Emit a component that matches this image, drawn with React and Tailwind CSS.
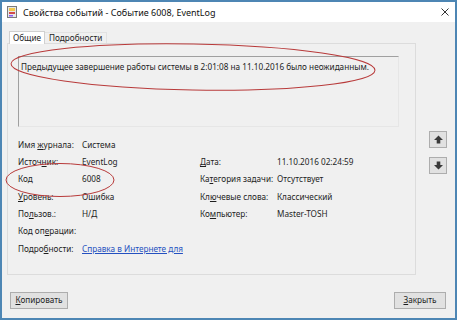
import React from "react";

const U = ({ children }) => <span className="underline underline-offset-1">{children}</span>;

function Row({ l, v, l2, v2, link }) {
  return (
    <div className="grid grid-cols-[64px_118px_77px_1fr] h-[17.33px] items-center whitespace-nowrap">
      <div>{l}</div>
      <div>{link ? <span className="text-[#2450c0] underline underline-offset-1">{v}</span> : v}</div>
      <div>{l2}</div>
      <div>{v2}</div>
    </div>
  );
}

function Arrow({ up }) {
  return (
    <div className="w-[18px] h-[17px] bg-[#e1e1e1] border border-[#adadad] flex items-center justify-center">
      <svg width="9" height="9" viewBox="0 0 10 10">
        <polygon
          points={up ? "5,0.5 10,5.5 7,5.5 7,9.5 3,9.5 3,5.5 0,5.5" : "5,9.5 10,4.5 7,4.5 7,0.5 3,0.5 3,4.5 0,4.5"}
          fill="#3a3a3a"
        />
      </svg>
    </div>
  );
}

export default function App() {
  return (
    <div className="relative w-[457px] h-[320px] overflow-hidden border-2 border-[#4d86b4] bg-[#f0f0f0] flex flex-col font-['Noto_Sans',sans-serif] text-[8.2px] text-[#1e1e1e] leading-none">
      {/* title bar */}
      <div className="h-[20px] bg-white flex items-center shrink-0">
        <svg className="ml-[5px]" width="10" height="12" viewBox="0 0 10 12">
          <rect x="0.5" y="0.5" width="9" height="11" fill="#e8e8e8" stroke="#7a7a7a" />
          <rect x="2" y="2" width="6" height="3" fill="#f2c94c" />
          <rect x="2" y="6" width="6" height="2" fill="#d14b4b" />
          <rect x="2" y="9" width="4" height="1.5" fill="#8b5cf6" />
        </svg>
        <span className="ml-[6px] text-[9px] text-[#111]">Свойства событий - Событие 6008, EventLog</span>
        <svg className="ml-auto mr-[6px]" width="8" height="8" viewBox="0 0 8 8">
          <path d="M0.5 0.5 L7.5 7.5 M7.5 0.5 L0.5 7.5" stroke="#333" strokeWidth="1" />
        </svg>
      </div>

      {/* body */}
      <div className="flex-1 flex flex-col pl-[5px]">
        <div className="flex">
          <div className="flex flex-col w-[409px]">
            {/* tabs */}
            <div className="flex items-end h-[13px] mt-[8px] pl-[2px]">
              <div className="h-[13px] px-[3px] bg-white border border-b-0 border-[#d0d0d0] flex items-center relative top-[1px]">
                Общие
              </div>
              <div className="h-[11px] px-[4px] border border-b-0 border-l-0 border-[#e2e2e2] flex items-center">
                Подробности
              </div>
            </div>
            {/* panel */}
            <div className="h-[232px] border border-[#dcdcdc] bg-[#f0f0f0] flex flex-col pl-[10px]">
              <div className="mt-[12px] w-[381px] h-[71px] border-t border-l border-t-[#a0a0a0] border-l-[#a0a0a0] border-r border-b border-r-[#e6e6e6] border-b-[#e6e6e6] pl-[2px] pt-[6px] whitespace-nowrap">
                Предыдущее завершение работы системы в 2:01:08 на 11.10.2016 было неожиданным.
              </div>
              <div className="mt-[9px] flex flex-col">
                <Row l={<>Имя <U>ж</U>урнала:</>} v="Система" />
                <Row l={<>Источ<U>н</U>ик:</>} v="EventLog" l2={<><U>Д</U>ата:</>} v2="11.10.2016 02:24:59" />
                <Row l="Код" v="6008" l2={<>Ка<U>т</U>егория задачи:</>} v2="Отсутствует" />
                <Row l={<><U>У</U>ровень:</>} v="Ошибка" l2={<>Кл<U>ю</U>чевые слова:</>} v2="Классический" />
                <Row l={<>По<U>л</U>ьзов.:</>} v="Н/Д" l2={<>Ко<U>м</U>пьютер:</>} v2="Master-TOSH" />
                <Row l={<>Код оп<U>е</U>рации:</>} v="" />
                <Row l={<>Подро<U>б</U>ности:</>} v="Справка в Интернете для" link />
              </div>
            </div>
          </div>
          <div className="flex flex-col ml-[13px] pt-[109px] gap-[9px]">
            <Arrow up />
            <Arrow />
          </div>
        </div>
        {/* buttons */}
        <div className="flex justify-between mt-[17px] pr-[9px]">
          <div className="ml-[3px] w-[58px] h-[17px] bg-[#e1e1e1] border border-[#adadad] flex items-center justify-center">
            <span><U>К</U>опировать</span>
          </div>
          <div className="w-[52px] h-[17px] bg-[#e1e1e1] border border-[#adadad] flex items-center justify-center">
            <span><U>З</U>акрыть</span>
          </div>
        </div>
      </div>

      {/* red ellipses (overlay) */}
      <svg className="absolute left-[-2px] top-[-2px] pointer-events-none" width="457" height="320" viewBox="0 0 457 320">
        <ellipse cx="193" cy="67" rx="182" ry="23" fill="none" stroke="#b83a3a" strokeWidth="1" transform="rotate(1 193 67)" />
        <ellipse cx="60" cy="180" rx="54" ry="16.5" fill="none" stroke="#b83a3a" strokeWidth="1" />
      </svg>
    </div>
  );
}
